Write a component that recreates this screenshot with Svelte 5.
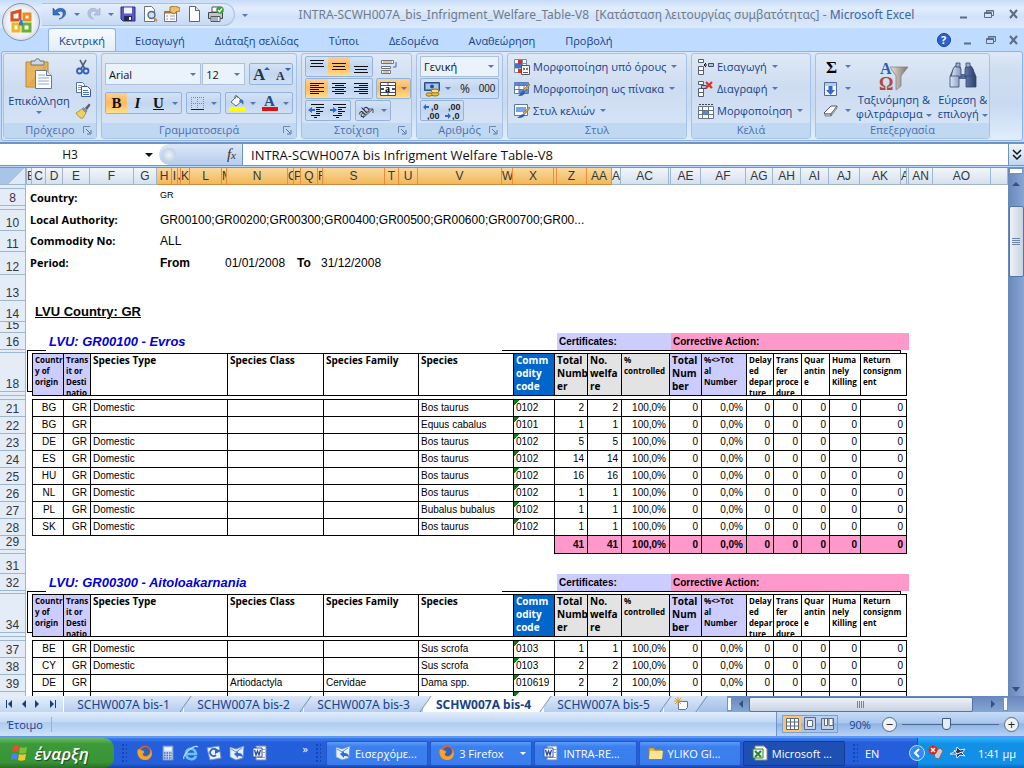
<script>
  const ribbonTabs = ["Κεντρική", "Εισαγωγή", "Διάταξη σελίδας", "Τύποι", "Δεδομένα", "Αναθεώρηση", "Προβολή"]
  let activeTab = $state("Κεντρική")

  const sheets = ["SCHW007A bis-1", "SCHW007A bis-2", "SCHW007A bis-3", "SCHW007A bis-4", "SCHW007A bis-5"]
  let activeSheet = $state("SCHW007A bis-4")

  let cellName = $state("H3")
  let formula = $state("INTRA-SCWH007A bis Infrigment Welfare Table-V8")
  let zoom = $state(46)

  // column letter and width, the last one takes what is left
  const columns = [
    ["", 1], ["B", 5], ["C", 14], ["D", 17], ["E", 27], ["F", 44], ["G", 23], ["H", 15], ["I", 6], ["J", 3],
    ["K", 9], ["L", 32], ["M", 5], ["N", 61], ["O", 6], ["P", 7], ["Q", 17], ["R", 5], ["S", 62], ["T", 14],
    ["U", 19], ["V", 84], ["W", 11], ["X", 41], ["", 3], ["Z", 30], ["AA", 25], ["AB", 9], ["AC", 48], ["", 2],
    ["AE", 30], ["AF", 45], ["AG", 27], ["AH", 28], ["AI", 28], ["AJ", 31], ["AK", 41], ["AL", 6], ["", 2],
    ["AN", 24], ["AO", 58], ["", 0],
  ]
  const isSelected = (i) => i >= 7 && i <= 26

  // one entry per data column: [colspan, heading, class]
  const fields = [
    [2, "Countr\ny of\norigin", "small lilac"],
    [1, "Trans\nit or\nDesti\nnatio", "small lilac"],
    [8, "Species Type", ""],
    [5, "Species Class", ""],
    [3, "Species Family", ""],
    [2, "Species", ""],
    [1, "Comm\nodity\ncode", "blue"],
    [2, "Total\nNumb\ner", "grey"],
    [2, "No.\nwelfa\nre", "grey"],
    [1, "%\ncontrolled", "small grey"],
    [2, "Total\nNum\nber", "lilac"],
    [1, "%<>Tot\nal\nNumber", "small lilac"],
    [1, "Delay\ned\ndepar\nture", "small"],
    [1, "Trans\nfer\nproce\ndure", "small"],
    [1, "Quar\nantin\ne", "small"],
    [1, "Huma\nnely\nKilling", "small"],
    [2, "Return\nconsignm\nent", "small"],
  ]

  const row = (from, type, cls, family, species, code, n) => [
    from, "GR", type, cls, family, species, code, n, n, "100,0%", "0", "0,0%", "0", "0", "0", "0", "0",
  ]

  const evros = [
    row("BG", "Domestic", "", "", "Bos taurus", "0102", "2"),
    row("BG", "", "", "", "Equus cabalus", "0101", "1"),
    row("DE", "Domestic", "", "", "Bos taurus", "0102", "5"),
    row("ES", "Domestic", "", "", "Bos taurus", "0102", "14"),
    row("HU", "Domestic", "", "", "Bos taurus", "0102", "16"),
    row("NL", "Domestic", "", "", "Bos taurus", "0102", "1"),
    row("PL", "Domestic", "", "", "Bubalus bubalus", "0102", "1"),
    row("SK", "Domestic", "", "", "Bos taurus", "0102", "1"),
  ]
  const aitolo = [
    row("BE", "Domestic", "", "", "Sus scrofa", "0103", "1"),
    row("CY", "Domestic", "", "", "Sus scrofa", "0103", "2"),
    row("DE", "", "Artiodactyla", "Cervidae", "Dama spp.", "010619", "2"),
    fields.map(() => ""),
  ]
  const totals = ["41", "41", "100,0%", "0", "0,0%", "0", "0", "0", "0", "0"]

  const quick = ["firefox", "calc", "ie", "outlook", "mail", "word"]
  const tasks = [
    ["mail", "Εισερχόμε..."],
    ["firefox", "3 Firefox"],
    ["word", "INTRA-RE..."],
    ["folder", "YLIKO GI..."],
    ["excel", "Microsoft ..."],
  ]
</script>

{#snippet arrow()}<i class="arrow"></i>{/snippet}

{#snippet lines(kind, y)}
  <svg width="16" height="16" viewBox="0 0 16 16" stroke="#111" stroke-width="1">
    {#if kind == "v"}
      {#each [0, 1, 2] as n}
        <path d="M{n == 1 ? 2 : 1} {n * 3 + y}.5h{n == 1 ? 12 : 14}" />
      {/each}
    {:else}
      {#each [0, 1, 2, 3, 4, 5] as n}
        {@const short = n % 2 ? 5 : 0}
        <path d="M{kind == 'left' ? 1 : kind == 'right' ? 1 + short : 1 + Math.ceil(short / 2)} {n * 2 + y}.5h{14 - short}" />
      {/each}
    {/if}
  </svg>
{/snippet}

{#snippet icon(name)}
  {#if name == "undo"}
    <svg width="16" height="16" viewBox="0 0 16 16"><path d="M1 2v7h7L5.5 6.500C8 4 12 5 11 9c-.5 2-2 3-4 4 4-.5 7-3 6.500-7C13 2 7 1 3.500 4.500z" fill="#3c6fc8" stroke="#2450a0" stroke-width=".6" /></svg>
  {:else if name == "redo"}
    <svg width="16" height="16" viewBox="0 0 16 16"><path d="M14 2v7H8l2.500-2.500C8 4 4 5 4.500 9c.3 2 1.500 3 3 4-4-.5-6-3-5.500-7C3 2 8 1 12 4.500z" fill="#b4c4dc" stroke="#94a8c8" stroke-width=".6" /></svg>
  {:else if name == "save"}
    <svg width="16" height="16" viewBox="0 0 16 16"><path d="M1 1h14v14H3l-2-2z" fill="#5a5ec0" stroke="#2c2c84" /><path d="M4 1.500h8v6H4z" fill="#f0f2ff" /><path d="M4 10h8v5H4z" fill="#26265c" /><path d="M9 11h2v3H9z" fill="#fff" /></svg>
  {:else if name == "preview"}
    <svg width="16" height="16" viewBox="0 0 16 16"><path d="M2.500.5h7l3 3v12h-10z" fill="#fff" stroke="#66758e" /><circle cx="9.500" cy="9" r="3.500" fill="#c8e2f8" stroke="#56647c" stroke-width="1.400" /><path d="M12 12l3 3" stroke="#c98a3a" stroke-width="2" /></svg>
  {:else if name == "props"}
    <svg width="16" height="16" viewBox="0 0 16 16"><path d="M.5 5.500h12v10H.5z" fill="#fff" stroke="#6c7486" /><path d="M.5 5.500h12v2H.5z" fill="#c46a30" /><path d="M2 10h2m2 0h5M2 13h2m2 0h5" stroke="#8a94a8" /><path d="M6 1l5-1 5 2v3l-4 1-2 2-4-2z" fill="#ecc064" stroke="#8c6420" stroke-width=".8" /></svg>
  {:else if name == "new"}
    <svg width="16" height="16" viewBox="0 0 16 16"><path d="M3.500.5h6l4 4v11h-10z" fill="#fff" stroke="#56647c" /><path d="M9.500.5v4h4" fill="#dbe4f0" stroke="#56647c" /></svg>
  {:else if name == "print"}
    <svg width="16" height="16" viewBox="0 0 16 16"><path d="M4 1h7v5H4z" fill="#fff" stroke="#555566" /><path d="M.5 6.500h14v6H.5z" fill="#c2c6cc" stroke="#44484e" /><path d="M3 10.500h9v5H3z" fill="#fff" stroke="#555566" /><path d="M4 12h6M4 14h6" stroke="#56647c" /><circle cx="12" cy="4" r="3.800" fill="#3f9e3a" /><path d="M10 4l1.500 1.700L14 2.500" stroke="#fff" stroke-width="1.300" fill="none" /></svg>
  {:else if name == "paste"}
    <svg width="30" height="32" viewBox="0 0 30 32"><path d="M2 4h22v25H2z" fill="#e9b55c" stroke="#b98632" /><path d="M4 27L22 6v21z" fill="#d79c3e" opacity=".5" /><path d="M7 3h4c0-3 5-3 5 0h4v4H7z" fill="#d0d6de" stroke="#6d7684" /><path d="M11.500 12.500h11l5 5v13h-16z" fill="#fff" stroke="#6b7890" /><path d="M22.500 12.500v5h5" fill="#d5e0f0" stroke="#6b7890" /><path d="M14 17h7m-7 3h11m-11 3h11m-11 3h11" stroke="#8ea6cc" /></svg>
  {:else if name == "cut"}
    <svg width="16" height="16" viewBox="0 0 16 16"><path d="M5 1l5 9M11 1L6 10" stroke="#55627a" stroke-width="1.600" /><circle cx="4.500" cy="12" r="2.500" fill="none" stroke="#2f60c0" stroke-width="1.800" /><circle cx="11" cy="12" r="2.500" fill="none" stroke="#2f60c0" stroke-width="1.800" /></svg>
  {:else if name == "copy"}
    <svg width="16" height="16" viewBox="0 0 16 16"><path d="M1.500 1.500h6l2 2v8h-8z" fill="#fff" stroke="#5271a8" /><path d="M3 4.500h4M3 6.500h5M3 8.500h4" stroke="#7a9ad0" /><path d="M6.500 5.500h6l3 3v7h-9z" fill="#fff" stroke="#3a5a98" /><path d="M8 9.500h5M8 11.500h6M8 13.500h6" stroke="#4a76c0" /></svg>
  {:else if name == "brush"}
    <svg width="16" height="16" viewBox="0 0 16 16"><path d="M1 10l6-4 4 4-3 5c-3 1-5-2-7-5z" fill="#ecd260" stroke="#a08a34" stroke-width=".8" /><path d="M7 5.500l1.500-1.500L12.500 8 11 10z" fill="#8c8e94" /><path d="M10 5l4-4.500L15.500 2 12 7z" fill="#5e5870" /></svg>
  {:else if name == "grow" || name == "shrink"}
    <svg width="20" height="18" viewBox="0 0 20 18"><text x={name == "grow" ? 2 : 4} y="15" font-family="Liberation Serif, serif" font-weight="bold" font-size={name == "grow" ? 17 : 12} fill="#26364a">A</text><path d={name == "grow" ? "M13 5l3-3 3 3z" : "M13 3l3 3 3-3z"} fill="#2a62b8" /></svg>
  {:else if name == "border"}
    <svg width="15" height="15" viewBox="0 0 15 15"><path d="M1.500 1v12M7.500 1v12M13.500 1v12M1 1.500h13M1 7.500h13" stroke="#7b8aa4" stroke-dasharray="1 1" /><path d="M1 13.500h13" stroke="#222" /></svg>
  {:else if name == "fill"}
    <svg width="18" height="18" viewBox="0 0 18 18"><path d="M3 8l6-6 5 5-6 5z" fill="#f4f7fb" stroke="#5e6c80" /><path d="M7 5c-1-4 2-5 3-1" fill="none" stroke="#5e6c80" /><path d="M12 5c4 0 4 4 3 6-1-2-2-3-4-3z" fill="#3a70c4" /><path d="M1 13h16v4H1z" fill="#ff0" /></svg>
  {:else if name == "color"}
    <svg width="18" height="18" viewBox="0 0 18 18"><text x="3" y="12" font-family="Liberation Serif, serif" font-weight="bold" font-size="15" fill="#2b4a86">A</text><path d="M1 13h16v4H1z" fill="#e01010" /></svg>
  {:else if name == "wrap"}
    <svg width="18" height="16" viewBox="0 0 18 16"><path d="M1.500 1.500h12v3h-12zM1.500 7.500h9v2h-9zM1.500 11.500h9v3h-9z" fill="#fff" stroke="#6b7484" /><path d="M3 3h9M3 13h6" stroke="#b88a40" /><path d="M16 3v5h-3" fill="none" stroke="#3a68b4" /></svg>
  {:else if name == "merge"}
    <svg width="18" height="16" viewBox="0 0 18 16"><path d="M1.500 1.500h15v13h-15zM1.500 4.500h15M1.500 11.500h15M9 1v3M9 12v3" fill="#fff" stroke="#444c5c" /><path d="M2 8h3M13 8h3" stroke="#2455a8" stroke-width="2" /><text x="6" y="11" font-family="Liberation Serif, serif" font-size="10" font-weight="bold">a</text></svg>
  {:else if name == "outdent" || name == "indent"}
    <svg width="18" height="16" viewBox="0 0 18 16"><path d="M3 1.500h13M8 4.500h8M8 6.500h4M8 8.500h7M8 10.500h4M3 12.500h9M6 14.500h3" stroke="#111" /><path d={name == "outdent" ? "M0 7l4-3v2h3v2H4v2z" : "M7 7L3 4v2H0v2h3v2z"} fill="#2e68c8" /></svg>
  {:else if name == "orient"}
    <svg width="18" height="16" viewBox="0 0 18 16"><text x="0" y="12" font-family="Liberation Sans, sans-serif" font-size="11" fill="#222" transform="rotate(-45 6 9)">ab</text><path d="M5 15L15 6M15 10V6h-4" fill="none" stroke="#4a5666" /></svg>
  {:else if name == "money"}
    <svg width="18" height="16" viewBox="0 0 18 16"><path d="M1.500 1.500h15v8h-15z" fill="#5b88cc" stroke="#28508c" /><path d="M3 3h12v5H3z" fill="#a8c6ec" /><circle cx="9" cy="5.500" r="2" fill="#28508c" /><ellipse cx="12" cy="13" rx="4" ry="2" fill="#f0c040" stroke="#946c14" /><ellipse cx="12" cy="10" rx="4" ry="2" fill="#fce084" stroke="#946c14" /><ellipse cx="6" cy="13.500" rx="3" ry="1.700" fill="#f0c040" stroke="#946c14" /></svg>
  {:else if name == "incdec" || name == "decdec"}
    <svg width="20" height="18" viewBox="0 0 20 18"><g font-family="Liberation Sans, sans-serif" font-size="9" font-weight="bold" fill="#222"><text x={name == "incdec" ? 9 : 5} y="8">{name == "incdec" ? ",0" : ",00"}</text><text x={name == "incdec" ? 5 : 9} y="17">{name == "incdec" ? ",00" : ",0"}</text></g><path d={name == "incdec" ? "M1 5l3-3v2h3v2H4v2z" : "M8 14l-3-3v2H2v2h3v2z"} fill="#2e68c8" /></svg>
  {:else if name == "cond"}
    <svg width="16" height="16" viewBox="0 0 16 16"><path d="M.5.5h12v13H.5zM.5 4.500h12M.5 9h12M4.500.5v13M8.500.5v13" fill="#fff" stroke="#7a8cae" /><path d="M4 1h4v4H4zM4 10h3v4H4z" fill="#d03428" /><path d="M1 5h7v4H1z" fill="#4272c8" /><path d="M7.500 6.500h8v9h-8z" fill="#fff" stroke="#555" /><path d="M9 9l2 1-2 1m5-2l-2 1 2 1M9 13.500h5" stroke="#333" fill="none" stroke-width=".8" /></svg>
  {:else if name == "tablefmt"}
    <svg width="16" height="16" viewBox="0 0 16 16"><path d="M.5 1.500h14v11H.5z" fill="#fff" stroke="#5b78ac" /><path d="M.5 1.500h14v3H.5zM5 8h9v4H5z" fill="#5c8cdc" /><path d="M.5 4.500h14M.5 8.500h14M5 1v12M10 1v12" stroke="#5b78ac" /><path d="M15 3l1 1-5 6-2-1z" fill="#d8aa50" stroke="#7d5c20" stroke-width=".6" /><path d="M4 15c2-1 3-5 6-5l1 2c-2 3-4 3-7 3z" fill="#2a5cc0" /></svg>
  {:else if name == "cellstyle"}
    <svg width="16" height="16" viewBox="0 0 16 16"><path d="M.5 1.500h13v11H.5z" fill="#fff" stroke="#5b78ac" /><path d="M2 4h10v5H2z" fill="#78a4e8" /><path d="M15 4l1 1-5 6-2-1z" fill="#d8aa50" stroke="#7d5c20" stroke-width=".6" /><path d="M3 15c2-1 4-4 7-4l1 1c-2 3-5 3-8 3z" fill="#2a5cc0" /></svg>
  {:else if name == "insert" || name == "delete"}
    <svg width="16" height="16" viewBox="0 0 16 16"><path d="M.5.5h5v3h-5zM.5 11.500h5v4h-5zM.5 7.500h5v4h-5z" fill="#fff" stroke="#555e70" />{#if name == "insert"}<path d="M10.500 4.500h5v3h-5z" fill="#a8c4f0" stroke="#444c5c" /><path d="M9 6H6M8 4L6 6l2 2" stroke="#111" fill="none" />{:else}<path d="M3.500 4.500h5v3h-5z" fill="#a8c4f0" stroke="#444c5c" /><path d="M8 1l6 6M14 1L8 7" stroke="#e03020" stroke-width="2.200" />{/if}</svg>
  {:else if name == "format"}
    <svg width="16" height="16" viewBox="0 0 16 16"><path d="M.5 3.500h15v12H.5zM.5 7.500h15M.5 11.500h15M4.500 3v12M10.500 3v12" fill="#fff" stroke="#66748e" /><path d="M5 8h5v3H5z" fill="#5888dc" /><path d="M1 1.500h14" stroke="#444" stroke-dasharray="2 1" /></svg>
  {:else if name == "sigma"}
    <svg width="16" height="16" viewBox="0 0 16 16"><text x="3" y="14" font-family="Liberation Serif, serif" font-weight="bold" font-size="17">Σ</text></svg>
  {:else if name == "filldown"}
    <svg width="16" height="16" viewBox="0 0 16 16"><path d="M1.500 1.500h12v13h-12z" fill="#f5f9ff" stroke="#4a68a4" /><path d="M2 2h11v3H2z" fill="#b4ccf0" /><path d="M5.500 5h4v4H12l-4.500 5L3 9h2.500z" fill="#2e68d0" /></svg>
  {:else if name == "eraser"}
    <svg width="16" height="16" viewBox="0 0 16 16"><path d="M1 10l7-7h6l-6 8H2z" fill="#fff" stroke="#555566" /><path d="M2 11h6v2H2zM8 11l6-8v2l-6 8z" fill="#c6ccd6" stroke="#555566" stroke-width=".6" /></svg>
  {:else if name == "sort"}
    <svg width="32" height="32" viewBox="0 0 32 32"><defs><linearGradient id="funnel"><stop offset="0" stop-color="#e8e4da" /><stop offset="1" stop-color="#77736c" /></linearGradient></defs><path d="M12 7h18l-7 9v10l-5 4V16z" fill="url(#funnel)" stroke="#8a8478" stroke-width=".8" /><text x="2" y="14" font-family="Liberation Serif, serif" font-weight="bold" font-size="16" fill="#2d5cb4">A</text><text x="1" y="30" font-family="Liberation Serif, serif" font-weight="bold" font-size="18" fill="#b0483c">Ω</text></svg>
  {:else if name == "find"}
    <svg width="30" height="32" viewBox="0 0 30 30"><defs><linearGradient id="lens"><stop offset="0" stop-color="#dde6f4" /><stop offset=".5" stop-color="#6f86b4" /><stop offset="1" stop-color="#2c3f6c" /></linearGradient></defs><path d="M6 6h7v7h4V6h7l4 8v6h-9v-2h-8v2H2v-6z" fill="#56699a" /><path d="M5 8l2-3h4l2 3v8H3zM17 8l2-3h4l2 3 2 8H17z" fill="url(#lens)" stroke="#34466e" stroke-width=".8" /><path d="M8 2h4v4H8zM18 2h4v4h-4z" fill="#9fb0d0" stroke="#34466e" stroke-width=".8" /><path d="M2 15h9v11H2zM18 15h10v11H18z" fill="url(#lens)" stroke="#34466e" stroke-width=".8" /></svg>
  {:else if name == "firefox"}
    <svg width="16" height="16" viewBox="0 0 16 16"><circle cx="8" cy="8" r="7.200" fill="#e8641c" /><circle cx="8.500" cy="6.500" r="4.500" fill="#3460b8" /><path d="M1 4c1 1 2 0 3 1s3 0 3 2-2 1-1 3 4 2 6 0 2-4 1-6c3 3 2 8-1 10s-8 1-10-2S0 6 1 4z" fill="#f4a428" /></svg>
  {:else if name == "calc"}
    <svg width="16" height="16" viewBox="0 0 16 16"><path d="M3 1h10v14H3z" fill="#c6d8f4" stroke="#6c8cc4" /><path d="M4.500 2.500h7v3h-7z" fill="#f5faff" /><path d="M4 8h8M4 10.500h8M4 13h8" stroke="#4468a8" stroke-width="1.400" stroke-dasharray="1.500 1" /></svg>
  {:else if name == "ie"}
    <svg width="16" height="16" viewBox="0 0 16 16"><path d="M13 11c-2 5-10 4-10-2.500S12 2 13 9H4" fill="none" stroke="#6cc0f8" stroke-width="2.600" /><path d="M1 14C-1 10 11-1 15 2" fill="none" stroke="#b8e2fc" stroke-width="1.200" /></svg>
  {:else if name == "outlook"}
    <svg width="16" height="16" viewBox="0 0 16 16"><path d="M1 3l12-2 2 12-11 2z" fill="#eef4fc" stroke="#7893c0" /><path d="M10 10a3.500 3.500 0 1 1 0-5" fill="none" stroke="#2c68c0" stroke-width="1.800" /><path d="M9 3l6 3-6 3z" fill="#2c68c0" /></svg>
  {:else if name == "mail"}
    <svg width="16" height="16" viewBox="0 0 16 16"><path d="M1 2l6 2 8-3-1 12-7 2-6-3z" fill="#e4effc" stroke="#6c8cc4" stroke-width=".8" /><path d="M2 4l5 3 6-4" fill="none" stroke="#6c8cc4" /><path d="M5 9l4-3v2c3 0 5 1 5 5-1-2-3-2-5-2v2z" fill="#2a6ed4" /></svg>
  {:else if name == "word"}
    <svg width="16" height="16" viewBox="0 0 16 16"><path d="M4 1h10v14H4z" fill="#fff" stroke="#7088b8" /><path d="M6 12.500h7M10 4.500h3M11 7.500h2" stroke="#88a0d0" /><path d="M1 3h9v9H1z" fill="#f4f8ff" stroke="#3a5ca8" /><path d="M2.500 5l1.500 5 1.500-4L7 10l1.500-5" fill="none" stroke="#2c4c98" stroke-width="1.300" /></svg>
  {:else if name == "folder"}
    <svg width="16" height="16" viewBox="0 0 16 16"><path d="M1 3h5l1 2h7v9H1z" fill="#e4b93c" stroke="#a88220" stroke-width=".8" /><path d="M2 6h13l-1 8H1z" fill="#fbe490" /></svg>
  {:else if name == "excel"}
    <svg width="16" height="16" viewBox="0 0 16 16"><path d="M3 1h9l3 3v11H3z" fill="#fff" stroke="#888" /><path d="M1 4h10v9H1z" fill="#e9f6e6" stroke="#2c8434" /><path d="M3 6l6 6M9 6l-6 6" stroke="#2c8434" stroke-width="2" /></svg>
  {:else if name == "launch"}
    <svg width="9" height="9" viewBox="0 0 9 9"><path d="M.5 7V.5H7" fill="none" stroke="#7088b0" /><path d="M3 3l4 4M8 4v4H4" fill="none" stroke="#5672a4" /></svg>
  {/if}
{/snippet}

{#snippet winButtons()}
  <button aria-label="Ελαχιστοποίηση"><svg width="12" height="12"><path d="M2 9.500h7" stroke="#5c6c84" stroke-width="2" /></svg></button>
  <button aria-label="Επαναφορά"><svg width="12" height="12"><path d="M3.500 4V2.500h7v5H9M1.500 4.500h7v5h-7zM1.500 5.500h7M3 3h7" fill="none" stroke="#5c6c84" /></svg></button>
  <button aria-label="Κλείσιμο"><svg width="12" height="12"><path d="M2 2l7 8M9 2l-7 8" stroke="#5c6c84" stroke-width="2" /></svg></button>
{/snippet}

{#snippet rowHead(n)}<th class="rowhead" scope="row"><div>{n}</div></th>{/snippet}

{#snippet sectionTitle(n, title)}
  <tr class="h17">
    {@render rowHead(n)}
    <td colspan="3"></td>
    <td colspan="21" class="section">{title}</td>
    <td></td>
    <td colspan="5" class="band lilac">Certificates:</td>
    <td colspan="9" class="band pink">Corrective Action:</td>
    <td colspan="3"></td>
  </tr>
{/snippet}

{#snippet tableHead(n)}
  <tr class="h3">
    {@render rowHead("")}
    <td></td>
    <td class="frame-top frame-left"></td>
    <td class="frame-top"></td>
    <td colspan="19"></td>
    <td colspan="15" class="frame-top frame-right"></td>
    <td colspan="5"></td>
  </tr>
  <tr class="h39">
    {@render rowHead(n)}
    <td></td>
    <td class="frame-left frame-bottom"></td>
    {#each fields as [span, text, cls]}
      <th colspan={span} rowspan="2" class="field {cls}"><div>{text}</div></th>
    {/each}
    <td colspan="4"></td>
  </tr>
  <tr class="h4">{@render rowHead("")}<td colspan="2"></td><td colspan="4"></td></tr>
  <tr class="h4">{@render rowHead("")}<td colspan="2"></td><td colspan="36" class="ruled"></td><td colspan="4"></td></tr>
{/snippet}

{#snippet dataRow(n, cells)}
  <tr class="h17">
    {@render rowHead(n)}
    <td colspan="2"></td>
    {#each cells as text, i}
      <td
        colspan={fields[i][0]}
        class="cell"
        class:mid={i == 0}
        class:num={i == 1 || i > 6}
        class:flag={i == 6}>{text}</td
      >
    {/each}
    <td colspan="4"></td>
  </tr>
{/snippet}

<div class="app">
  <div class="top">
    <button class="office" aria-label="Office">
      <svg width="26" height="26" viewBox="0 0 26 26" fill="none" stroke-width="3">
        <path d="M11 11H4V4l8-2v9" stroke="#d8501c" />
        <path d="M16 5h6v6h-6z" stroke="#ee8a1c" />
        <path d="M5 15h6v7H5z" stroke="#f0b81c" />
        <path d="M15 15h7v7h-7z" stroke="#6cb030" />
        <path d="M11 15h4M13 11v4" stroke="#2c80c8" />
      </svg>
    </button>
    <header class="titlebar">
      <div class="qat">
        <button aria-label="Αναίρεση">{@render icon("undo")}</button>{@render arrow()}
        <button aria-label="Ακύρωση αναίρεσης">{@render icon("redo")}</button>{@render arrow()}
        {#each ["save", "preview", "props", "new", "print"] as name}
          <button aria-label={name}>{@render icon(name)}</button>
        {/each}
      </div>
      <div class="qat-more">{@render arrow()}</div>
      <h1>
        INTRA-SCWH007A_bis_Infrigment_Welfare_Table-V8&nbsp; [Κατάσταση λειτουργίας συμβατότητας] - <b>Microsoft Excel</b>
      </h1>
      <div class="win">{@render winButtons()}</div>
    </header>
    <nav class="tabs">
      {#each ribbonTabs as tab}
        <button class:active={tab == activeTab} onclick={() => (activeTab = tab)}>{tab}</button>
      {/each}
      <div class="win">
        <button aria-label="Βοήθεια"><svg width="14" height="14"><circle cx="7" cy="7" r="6.500" fill="#2b62d0" stroke="#17408f" /><text x="4" y="11" font-size="11" font-weight="bold" fill="#fff">?</text></svg></button>
        {@render winButtons()}
      </div>
    </nav>
  </div>

  <div class="ribbon">
    <section class="group clipboard">
      <div class="body">
        <button class="big">{@render icon("paste")}<span>Επικόλληση</span>{@render arrow()}</button>
        <div class="stack">
          <button aria-label="Αποκοπή">{@render icon("cut")}</button>
          <button aria-label="Αντιγραφή">{@render icon("copy")}</button>
          <button aria-label="Πινέλο μορφοποίησης">{@render icon("brush")}</button>
        </div>
      </div>
      <h2>Πρόχειρο<span>{@render icon("launch")}</span></h2>
    </section>

    <section class="group font">
      <div class="body rows two">
        <div class="line">
          <div class="combo family"><select aria-label="Γραμματοσειρά"><option>Arial</option></select>{@render arrow()}</div>
          <div class="combo size"><select aria-label="Μέγεθος"><option>12</option></select>{@render arrow()}</div>
          <div class="set push">
            <button aria-label="Μεγέθυνση">{@render icon("grow")}</button>
            <button aria-label="Σμίκρυνση">{@render icon("shrink")}</button>
          </div>
        </div>
        <div class="line spread">
          <div class="set serif">
            <button class="on">B</button>
            <button class="it">I</button>
            <button class="un">U</button>
            {@render arrow()}
          </div>
          <div class="set"><button aria-label="Περίγραμμα">{@render icon("border")}</button>{@render arrow()}</div>
          <div class="set">
            <button aria-label="Γέμισμα">{@render icon("fill")}</button>{@render arrow()}
            <button aria-label="Χρώμα">{@render icon("color")}</button>{@render arrow()}
          </div>
        </div>
      </div>
      <h2>Γραμματοσειρά<span>{@render icon("launch")}</span></h2>
    </section>

    <section class="group align">
      <div class="body rows">
        <div class="line">
          <div class="set">
            <button aria-label="Επάνω">{@render lines("v", 1)}</button>
            <button class="on" aria-label="Μέση">{@render lines("v", 4)}</button>
            <button aria-label="Κάτω">{@render lines("v", 7)}</button>
          </div>
          <button class="wrap" aria-label="Αναδίπλωση">{@render icon("wrap")}</button>
        </div>
        <div class="line">
          <div class="set">
            <button class="on" aria-label="Αριστερά">{@render lines("left", 2)}</button>
            <button aria-label="Κέντρο">{@render lines("center", 2)}</button>
            <button aria-label="Δεξιά">{@render lines("right", 2)}</button>
          </div>
          <div class="set on"><button aria-label="Συγχώνευση">{@render icon("merge")}</button>{@render arrow()}</div>
        </div>
        <div class="line">
          <div class="set">
            <button aria-label="Μείωση εσοχής">{@render icon("outdent")}</button>
            <button aria-label="Αύξηση εσοχής">{@render icon("indent")}</button>
          </div>
          <div class="set"><button aria-label="Προσανατολισμός">{@render icon("orient")}</button>{@render arrow()}</div>
        </div>
      </div>
      <h2>Στοίχιση<span>{@render icon("launch")}</span></h2>
    </section>

    <section class="group number">
      <div class="body rows">
        <div class="line">
          <div class="combo wide"><select aria-label="Μορφή αριθμού"><option>Γενική</option></select>{@render arrow()}</div>
        </div>
        <div class="line">
          <div class="set full">
            <button aria-label="Λογιστική">{@render icon("money")}</button>{@render arrow()}
            <button class="percent">%</button>
            <button class="zeros">000</button>
          </div>
        </div>
        <div class="line">
          <div class="set">
            <button aria-label="Περισσότερα δεκαδικά">{@render icon("incdec")}</button>
            <button aria-label="Λιγότερα δεκαδικά">{@render icon("decdec")}</button>
          </div>
        </div>
      </div>
      <h2>Αριθμός<span>{@render icon("launch")}</span></h2>
    </section>

    <section class="group style">
      <div class="body rows">
        <button class="item">{@render icon("cond")}Μορφοποίηση υπό όρους{@render arrow()}</button>
        <button class="item">{@render icon("tablefmt")}Μορφοποίηση ως πίνακα{@render arrow()}</button>
        <button class="item">{@render icon("cellstyle")}Στυλ κελιών{@render arrow()}</button>
      </div>
      <h2>Στυλ</h2>
    </section>

    <section class="group cells">
      <div class="body rows">
        <button class="item">{@render icon("insert")}Εισαγωγή{@render arrow()}</button>
        <button class="item">{@render icon("delete")}Διαγραφή{@render arrow()}</button>
        <button class="item">{@render icon("format")}Μορφοποίηση{@render arrow()}</button>
      </div>
      <h2>Κελιά</h2>
    </section>

    <section class="group editing">
      <div class="body">
        <div class="stack">
          <button aria-label="Άθροισμα">{@render icon("sigma")}{@render arrow()}</button>
          <button aria-label="Συμπλήρωση">{@render icon("filldown")}{@render arrow()}</button>
          <button aria-label="Απαλοιφή">{@render icon("eraser")}{@render arrow()}</button>
        </div>
        <button class="big">{@render icon("sort")}<span>Ταξινόμηση &amp;</span><span>φιλτράρισμα{@render arrow()}</span></button>
        <button class="big">{@render icon("find")}<span>Εύρεση &amp;</span><span>επιλογή{@render arrow()}</span></button>
      </div>
      <h2>Επεξεργασία</h2>
    </section>
  </div>

  <div class="formulabar">
    <div class="namebox">
      <input aria-label="Πλαίσιο ονόματος" bind:value={cellName} />
      <i class="arrow dark"></i>
    </div>
    <div class="fx"><span class="knob"></span><em>f<small>x</small></em></div>
    <input class="formula" aria-label="Γραμμή τύπων" bind:value={formula} />
    <button class="expand" aria-label="Ανάπτυξη"><svg width="10" height="12"><path d="M1 1l4 4 4-4M1 6l4 4 4-4" fill="none" stroke="#111" stroke-width="1.500" /></svg></button>
  </div>

  <main class="sheet">
    <div class="grid">
      <table>
        <colgroup>
          <col style="width: 26px" />
          {#each columns as [, width]}
            <col style={width ? `width: ${width}px` : ""} />
          {/each}
        </colgroup>
        <thead>
          <tr>
            <th class="corner"></th>
            {#each columns as [letter], i}
              <th class="colhead" class:selected={isSelected(i)}><div>{letter}</div></th>
            {/each}
          </tr>
        </thead>
        <tbody>
          <tr class="h4">{@render rowHead("")}<td colspan="42"></td></tr>
          <tr class="h17">
            {@render rowHead(8)}
            <td colspan="7" class="label">Country:</td>
            <td colspan="35" class="tiny">GR</td>
          </tr>
          <tr class="h4">{@render rowHead("")}<td colspan="42"></td></tr>
          <tr class="h21">
            {@render rowHead(10)}
            <td colspan="7" class="label">Local Authority:</td>
            <td colspan="35" class="value">GR00100;GR00200;GR00300;GR00400;GR00500;GR00600;GR00700;GR00...</td>
          </tr>
          <tr class="h21">
            {@render rowHead(11)}
            <td colspan="7" class="label">Commodity No:</td>
            <td colspan="35" class="value">ALL</td>
          </tr>
          <tr class="h23">
            {@render rowHead(12)}
            <td colspan="7" class="label">Period:</td>
            <td colspan="5" class="value bold">From</td>
            <td colspan="3" class="value">01/01/2008</td>
            <td colspan="2" class="value bold">To</td>
            <td colspan="25" class="value">31/12/2008</td>
          </tr>
          <tr class="h26">{@render rowHead(13)}<td colspan="42"></td></tr>
          <tr class="h21">
            {@render rowHead(14)}
            <td colspan="2"></td>
            <td colspan="40" class="country">LVU Country: GR</td>
          </tr>
          <tr class="h11">{@render rowHead(15)}<td colspan="42"></td></tr>

          {@render sectionTitle(16, "LVU: GR00100 - Evros")}
          {@render tableHead(18)}
          {#each evros as cells, i}
            {@render dataRow(21 + i, cells)}
          {/each}
          <tr class="h14">
            {@render rowHead(29)}
            <td colspan="24"></td>
            {#each totals as text, i}
              <td colspan={fields[i + 7][0]} rowspan="2" class="cell num total">{text}</td>
            {/each}
            <td colspan="4"></td>
          </tr>
          <tr class="h4">{@render rowHead("")}<td colspan="24"></td><td colspan="4"></td></tr>
          <tr class="h20">{@render rowHead(31)}<td colspan="42"></td></tr>

          {@render sectionTitle(32, "LVU: GR00300 - Aitoloakarnania")}
          {@render tableHead(34)}
          {#each aitolo as cells, i}
            {@render dataRow(i < 3 ? 37 + i : "", cells)}
          {/each}
        </tbody>
      </table>
    </div>
    <div class="vscroll">
      <span class="split"></span>
      <i class="tri up"></i>
      <div class="thumb"></div>
      <i class="tri down"></i>
    </div>
  </main>

  <div class="sheetbar">
    <div class="sheetnav">
      <svg width="63" height="16" fill="#1c3c78"><path d="M6 4h1v8H6zM12 4v8L8 8zM26 4v8l-4-4zM35 4v8l4-4zM50 4v8l4-4zM55 4h1v8h-1z" /></svg>
    </div>
    {#each sheets as name}
      <button class="sheettab" class:active={name == activeSheet} onclick={() => (activeSheet = name)}>{name}</button>
    {/each}
    <button class="sheettab add" aria-label="Εισαγωγή φύλλου">
      <svg width="18" height="16"><path d="M5.500 5.500h9v6l-2 2h-7z" fill="#fff" stroke="#5876ac" /><path d="M5 1v8M1 5h8M2 2l6 6M8 2l-6 6" stroke="#e89c28" /></svg>
    </button>
    <div class="hscroll">
      <span class="grip"></span>
      <i class="tri left"></i>
      <div class="thumb"></div>
      <i class="tri right"></i>
      <span class="grip"></span>
    </div>
  </div>

  <div class="status">
    <span class="ready">Έτοιμο</span>
    <div class="zoombar">
      <div class="views">
        <button class="on" aria-label="Κανονική"><svg width="16" height="14"><path d="M2.500 1.500h12v11h-12zM2.500 5h12M2.500 9h12M6.500 1v12M10.500 1v12" fill="#fff" stroke="#5c6880" /></svg></button>
        <button aria-label="Διάταξη σελίδας"><svg width="16" height="14"><path d="M2.500.5h11v12h-11z" fill="#c8d4e6" stroke="#5c6880" /><path d="M5.500 3.500h5v6h-5z" fill="#fff" stroke="#5c6880" /></svg></button>
        <button aria-label="Προεπισκόπηση"><svg width="16" height="14"><path d="M1.500 1.500h12v11h-12z" fill="#c8d4e6" stroke="#5c6880" /><path d="M4.500 1.500h3v7h-3zM9 1.500h4v7H9z" fill="#fff" stroke="#5c6880" /></svg></button>
      </div>
      <span class="pct">90%</span>
      <button class="round" aria-label="Σμίκρυνση">−</button>
      <input type="range" aria-label="Ζουμ" bind:value={zoom} />
      <button class="round" aria-label="Μεγέθυνση">+</button>
    </div>
  </div>

  <footer class="taskbar">
    <button class="start">
      <svg width="18" height="18" viewBox="0 0 18 18"><path d="M2 3c2-2 4-2 6-1L7 8C5 7 3 7 1 8z" fill="#e8502c" /><path d="M9 3c2 1 4 1 7 0l-1 6c-3 1-5 1-7 0z" fill="#7cc038" /><path d="M1 10c2-1 4-1 6 0l-1 6c-2-1-4-1-6 0z" fill="#4a84e8" /><path d="M8 10c2 1 4 1 7 0l-1 6c-3 1-5 1-7 0z" fill="#f8c828" /></svg>
      έναρξη
    </button>
    <span class="dots"></span>
    <div class="quick">
      {#each quick as name}
        <button aria-label={name}>{@render icon(name)}</button>
      {/each}
      <span class="more">»</span>
    </div>
    <span class="dots"></span>
    <div class="tasks">
      {#each tasks as [name, title]}
        <button class:current={name == "excel"}>
          {@render icon(name)}<span>{title}</span>
          {#if name == "firefox"}<i class="arrow light"></i>{/if}
        </button>
      {/each}
    </div>
    <span class="dots"></span>
    <span class="lang">EN</span>
    <div class="tray">
      <button class="hide" aria-label="Απόκρυψη"><svg width="16" height="16"><circle cx="8" cy="8" r="7.500" fill="#2f8cf0" stroke="#b8e0ff" /><path d="M10 4L6 8l4 4" fill="none" stroke="#fff" stroke-width="2" /></svg></button>
      <svg width="18" height="16"><path d="M6 7l6-4 3 3-4 8-4-1z" fill="#c8ccd4" stroke="#666c78" /><circle cx="5" cy="5" r="4.500" fill="#d82818" /><path d="M3 3l4 4M7 3L3 7" stroke="#fff" stroke-width="1.400" /></svg>
      <svg width="18" height="16"><path d="M1 9l6-3 1-4 3 3 5-1-3 4 3 3-5-1-3 3-1-4z" fill="#1c3878" stroke="#e4f0ff" /><path d="M5 5l3 4 5-2" stroke="#fff" fill="none" /></svg>
      <time>1:41 μμ</time>
    </div>
  </footer>
</div>

<style>
  :global(body) {
    margin: 0;
    overflow: hidden;
  }
  .app {
    height: 100vh;
    display: flex;
    flex-direction: column;
    font-family: "Open Sans", "Noto Sans", sans-serif;
    font-size: 11px;
    color: #15428b;
    background-color: #bfdbff;
  }
  .app * {
    box-sizing: border-box;
  }
  button,
  input,
  select {
    font: inherit;
    color: inherit;
    border: none;
    background: none;
    padding: 0;
    margin: 0;
    outline: none;
  }
  button {
    display: flex;
    align-items: center;
    justify-content: center;
    white-space: nowrap;
  }
  svg {
    display: block;
    flex: none;
  }
  h1,
  h2 {
    margin: 0;
    font-weight: normal;
    font-size: 11px;
  }

  .arrow {
    flex: none;
    display: inline-block;
    width: 5px;
    border: solid transparent;
    border-width: 3px 3px 0;
    border-top-color: #5579b4;
    vertical-align: middle;
  }
  .arrow.dark {
    border-width: 4px 4px 0;
    border-top-color: #111;
  }
  .arrow.light {
    border-top-color: #fff;
    margin-left: auto;
  }

  /* title bar and tabs */

  .top {
    position: relative;
    flex: none;
  }
  .office {
    position: absolute;
    left: 2px;
    top: 3px;
    z-index: 1;
    width: 38px;
    height: 38px;
    border-radius: 50%;
    border: 1px solid #8296b4;
    background: radial-gradient(circle, #fff 0, #eef1f6 55%, #b4bccb 100%);
  }
  .titlebar {
    height: 28px;
    display: flex;
    align-items: center;
    padding: 0 4px 0 42px;
    background: linear-gradient(#c8dcf8, #e2edfc 30%, #d0e2fa 60%, #dceafc);
  }
  .qat {
    display: flex;
    align-items: center;
    gap: 6px;
    height: 23px;
    padding: 0 10px;
    border: 1px solid #a9c2e4;
    border-left: none;
    border-radius: 0 12px 12px 0;
    background: linear-gradient(#e4eefb, #c6daf4);
  }
  .qat-more {
    width: 20px;
    text-align: center;
    line-height: 1;
  }
  h1 {
    flex: 1;
    text-align: center;
    color: #6f7b8c;
    font-family: "Noto Sans", sans-serif;
    font-size: 12px;
    white-space: nowrap;
  }
  h1 b {
    font-weight: normal;
    color: #3c66a4;
  }
  .win {
    display: flex;
    gap: 13px;
    align-items: center;
  }
  .tabs {
    height: 23px;
    display: flex;
    padding: 0 4px 0 48px;
    gap: 8px;
    background-color: #bfdbff;
  }
  .tabs > button {
    padding: 0 10px;
    border: 1px solid transparent;
    border-bottom: none;
  }
  .tabs > button.active {
    border-color: #8db2e3;
    border-radius: 3px 3px 0 0;
    background: linear-gradient(#f8fbff, #e2edfa);
  }
  .tabs .win {
    margin-left: auto;
    gap: 11px;
  }

  /* ribbon */

  .ribbon {
    flex: none;
    display: flex;
    gap: 4px;
    height: 90px;
    padding: 1px;
    margin: 0 1px;
    border: 1px solid #8db2e3;
    border-radius: 3px;
    background: linear-gradient(#dde9f7, #d0def0 20%, #c9daf0 60%, #e0eefc);
  }
  .group {
    flex: none;
    display: flex;
    flex-direction: column;
    border: 1px solid #a6c2e6;
    border-radius: 3px;
    background: linear-gradient(#dfe9f6, #cddcf0 40%, #d6e5f8);
  }
  .clipboard {
    width: 94px;
  }
  .font {
    width: 196px;
  }
  .align {
    width: 111px;
  }
  .number {
    width: 87px;
  }
  .style {
    width: 180px;
  }
  .cells {
    width: 120px;
  }
  .editing {
    width: 175px;
  }
  .body {
    flex: 1;
    display: flex;
    padding: 2px 3px 0;
  }
  .rows {
    flex-direction: column;
    gap: 1px;
  }
  .rows.two {
    gap: 7px;
    padding-top: 9px;
  }
  .group h2 {
    height: 15px;
    line-height: 14px;
    display: flex;
    justify-content: center;
    color: #4a6fb0;
    background-color: #c1d8f2;
  }
  .group h2 span {
    padding-top: 3px;
    margin-left: auto;
    margin-right: 4px;
  }
  .group h2:has(span)::before {
    content: "";
    width: 13px;
    margin-right: auto;
  }
  .big {
    flex-direction: column;
    justify-content: flex-start;
    line-height: 13px;
    padding: 2px 2px 0;
    gap: 1px;
  }
  .big span .arrow {
    margin-left: 3px;
  }
  .clipboard .big {
    width: 64px;
    gap: 4px;
  }
  .editing .big {
    padding: 4px 3px 0;
  }
  .stack {
    display: flex;
    flex-direction: column;
    gap: 1px;
    padding-left: 4px;
  }
  .stack button {
    height: 21px;
    gap: 6px;
  }
  .editing .stack {
    padding-right: 2px;
  }
  .line {
    display: flex;
    gap: 4px;
    height: 21px;
  }
  .two .line {
    gap: 1px;
    height: 22px;
  }
  .two .spread {
    gap: 4px;
  }
  .combo {
    display: flex;
    align-items: center;
    padding: 0 4px 0 3px;
    border: 1px solid #abc1de;
    background-color: #eaf2fb;
    color: #111;
  }
  .combo select {
    flex: 1;
    min-width: 0;
    appearance: none;
  }
  .family {
    width: 97px;
  }
  .size {
    width: 43px;
  }
  .wide {
    width: 79px;
  }
  .set {
    display: flex;
    align-items: center;
    border: 1px solid #93b2dc;
    border-radius: 2px;
    background: linear-gradient(#d4e3f6, #c2d6f0 50%, #cfe0f5);
  }
  .set.push {
    margin-left: 3px;
  }
  .set.full {
    width: 79px;
    color: #222;
  }
  .set button {
    height: 100%;
    min-width: 21px;
  }
  .set .arrow {
    margin: 0 3px;
  }
  .set .on,
  .set.on {
    background: linear-gradient(#fbd093, #fdb95c 50%, #ffe08c);
  }
  .align .set:not(.on) button {
    min-width: 22px;
  }
  .align .line:nth-child(2) {
    gap: 3px;
  }
  .wrap {
    margin-left: 3px;
  }
  .percent,
  .zeros {
    flex: 1;
    font-size: 12px;
  }
  .zeros {
    font-family: "Liberation Sans", sans-serif;
    font-size: 10px;
  }
  .serif {
    font-family: "Liberation Serif", serif;
    font-weight: bold;
    font-size: 15px;
    color: #111;
  }
  .it {
    font-style: italic;
  }
  .un {
    text-decoration: underline;
  }
  .item {
    height: 21px;
    justify-content: flex-start;
    gap: 3px;
    padding-left: 3px;
  }
  .item .arrow {
    margin-left: 2px;
  }

  /* formula bar */

  .formulabar {
    flex: none;
    display: flex;
    height: 24px;
    margin-top: 1px;
    border-top: 2px solid #6f93c4;
    border-bottom: 1px solid #6f93c4;
    background-color: #fff;
    color: #111;
    font-size: 13px;
  }
  .namebox {
    width: 159px;
    display: flex;
    align-items: center;
    padding: 0 6px 0 1px;
  }
  .namebox input {
    flex: 1;
    min-width: 0;
    text-align: center;
    padding-right: 6px;
    font-size: 12px;
  }
  .fx {
    width: 84px;
    display: flex;
    align-items: center;
    justify-content: space-between;
    padding: 0 6px 0 3px;
    border-right: 1px solid #6f93c4;
    border-radius: 11px 0 0 11px;
    background: linear-gradient(#dbe7f8, #b6cdee);
  }
  .knob {
    width: 14px;
    height: 14px;
    border-radius: 50%;
    background: radial-gradient(circle, #eef3fa, #b2c2da);
  }
  .fx em {
    font-family: "Liberation Serif", serif;
    font-size: 15px;
    color: #333;
  }
  .fx small {
    font-size: 11px;
  }
  .formula {
    flex: 1;
    padding-left: 8px;
  }
  .expand {
    width: 16px;
    border-left: 1px solid #6f93c4;
    background: linear-gradient(#eef4fc, #c3d7f2);
  }

  /* worksheet */

  .sheet {
    flex: 1;
    min-height: 0;
    display: flex;
    margin-top: 1px;
    border-top: 1px solid #6f93c4;
    background-color: #fff;
  }
  .grid {
    flex: 1;
    min-width: 0;
    overflow: hidden;
  }
  table {
    width: 100%;
    table-layout: fixed;
    border-collapse: separate;
    border-spacing: 0;
    color: #000;
  }
  th,
  td {
    padding: 0;
    line-height: 1;
    white-space: nowrap;
  }
  .corner,
  .colhead {
    height: 17px;
    border-right: 1px solid #9eb6ce;
    border-bottom: 1px solid #9eb6ce;
    background: linear-gradient(#f2f6fb, #d6e0ec);
  }
  .corner {
    background: linear-gradient(135deg, #a9c4e9 60%, #dfeaf8 60%);
  }
  .colhead div {
    height: 16px;
    overflow: hidden;
    text-align: center;
    font: 12px/16px "Liberation Sans", sans-serif;
    color: #33363c;
  }
  .colhead.selected {
    background: linear-gradient(#f9d89c, #f2b85a);
    border-right-color: #ee8c3c;
    border-bottom-color: #d48a3c;
  }
  .rowhead {
    border-right: 1px solid #9eb6ce;
    border-bottom: 1px solid #9eb6ce;
    background-color: #e4ecf7;
    vertical-align: bottom;
  }
  .rowhead div {
    display: flex;
    align-items: flex-end;
    justify-content: center;
    font: 12px/13px "Liberation Sans", sans-serif;
    color: #33363c;
  }
  .h11 .rowhead div {
    max-height: 10px;
    overflow: hidden;
  }
  .h3 { height: 3px; }
  .h4 { height: 4px; }
  .h11 { height: 11px; }
  .h14 { height: 14px; }
  .h17 { height: 17px; }
  .h20 { height: 20px; }
  .h21 { height: 21px; }
  .h23 { height: 23px; }
  .h26 { height: 26px; }
  .h39 { height: 39px; }
  .label {
    padding-left: 4px;
    font-weight: bold;
    font-size: 11px;
  }
  .value,
  .tiny {
    padding-left: 3px;
    font-family: "Liberation Sans", sans-serif;
    font-size: 12px;
  }
  .h21 .label,
  .h21 .value,
  .h23 .label,
  .h23 .value {
    padding-bottom: 2px;
  }
  .tiny {
    padding-top: 2px;
    font-size: 9px;
    vertical-align: top;
  }
  .bold {
    font-weight: bold;
  }
  .country,
  .section {
    padding-left: 3px;
    font: bold 13px/15px "Liberation Sans", sans-serif;
  }
  .country {
    text-decoration: underline;
  }
  .section {
    font-style: italic;
    color: #0000d8;
  }
  .band {
    padding-left: 2px;
    font: bold 10px/15px "Liberation Sans", sans-serif;
  }
  .lilac {
    background-color: #ccccff;
  }
  .pink,
  .total {
    background-color: #ff99cc;
  }
  .grey {
    background-color: #e3e3e3;
  }
  .frame-top {
    border-top: 1px solid #000;
  }
  .frame-left {
    border-left: 1px solid #000;
  }
  .frame-right {
    border-right: 1px solid #000;
  }
  .frame-bottom {
    border-bottom: 1px solid #000;
  }
  .field {
    border: solid #000;
    border-width: 1px 0 1px 1px;
    vertical-align: top;
    text-align: left;
  }
  .field:nth-last-child(2) {
    border-right-width: 1px;
  }
  .field div {
    height: 41px;
    padding-left: 2px;
    overflow: hidden;
    white-space: pre;
    font-size: 10px;
    line-height: 13px;
  }
  .field.small div {
    font-size: 8px;
    line-height: 11px;
  }
  .field.blue {
    background-color: #0066cc;
    color: #fff;
  }
  .ruled {
    border-bottom: 1px solid #000;
  }
  .cell {
    padding-left: 2px;
    border: solid #000;
    border-width: 0 0 1px 1px;
    font: 10px/12px "Liberation Sans", sans-serif;
  }
  .cell:nth-last-child(2) {
    border-right-width: 1px;
  }
  .cell.mid {
    text-align: center;
  }
  .cell.num {
    padding: 0 3px 0 0;
    text-align: right;
  }
  .cell.flag {
    background: linear-gradient(135deg, #107c10 4px, transparent 4px);
  }
  .cell.total {
    font-weight: bold;
  }

  /* scroll bars */

  .vscroll {
    width: 16px;
    display: flex;
    flex-direction: column;
    align-items: center;
    background: linear-gradient(90deg, #6688bc, #86a6d4);
  }
  .split {
    width: 14px;
    height: 6px;
    border: 1px solid #6f93c4;
    background-color: #fff;
  }
  .tri {
    border: 4px solid transparent;
  }
  .up {
    margin: 4px 0 20px;
    border-bottom-color: #35507e;
  }
  .down {
    margin: auto 0 0;
    border-top-color: #35507e;
    border-top-width: 5px;
  }
  .vscroll .thumb {
    width: 15px;
    height: 71px;
    border: 1px solid #5674a6;
    border-radius: 2px;
    background:
      repeating-linear-gradient(#6c84ac 0 1px, transparent 1px 2px) center / 8px 7px no-repeat,
      linear-gradient(90deg, #eef2f8, #c8d2e2);
  }
  .sheetbar {
    flex: none;
    display: flex;
    height: 16px;
    background: linear-gradient(#c4d8f4, #a4c0e8);
  }
  .sheetnav {
    width: 63px;
    background: linear-gradient(#e4eefb, #c2d6f2);
  }
  .sheettab {
    position: relative;
    width: 120px;
    border-left: 1px solid #fff;
    background: linear-gradient(#dce8f8, #b6cdee);
    font-family: "Noto Sans", sans-serif;
    font-size: 12px;
  }
  .sheettab::after {
    content: "";
    position: absolute;
    right: -3px;
    top: 0;
    z-index: 1;
    width: 10px;
    height: 16px;
    border-right: 1px solid #6f8cba;
    background: inherit;
    transform: skewX(-35deg);
  }
  .sheettab.active {
    background: #fff;
    font-weight: bold;
  }
  .sheettab.add {
    width: 36px;
  }
  .hscroll {
    flex: 1;
    display: flex;
    align-items: center;
    margin-left: 28px;
    background: linear-gradient(#6688bc, #86a6d4);
  }
  .hscroll .thumb {
    flex: 1;
    max-width: 224px;
    height: 15px;
    margin-right: auto;
    border: 1px solid #5674a6;
    border-radius: 2px;
    background:
      repeating-linear-gradient(90deg, #6c84ac 0 1px, transparent 1px 2px) center / 8px 7px no-repeat,
      linear-gradient(#eef2f8, #c8d2e2);
  }
  .grip {
    width: 5px;
    height: 14px;
    border: 1px solid #6f93c4;
    background-color: #fff;
  }
  .left {
    margin: 0 6px 0 3px;
    border-right-color: #35507e;
  }
  .right {
    margin: 0 4px;
    border-left-color: #35507e;
  }
  .hscroll .grip:last-child {
    margin-right: 16px;
  }

  /* status bar */

  .status {
    flex: none;
    display: flex;
    align-items: center;
    height: 24px;
    background: linear-gradient(#e0ecfb, #c4daf6 40%, #aecbf0 45%, #cfe2fa);
  }
  .ready {
    width: 52px;
    padding-left: 7px;
    border-right: 1px solid #8db2e3;
  }
  .zoombar {
    margin-left: auto;
    height: 100%;
    display: flex;
    align-items: center;
    gap: 5px;
    padding: 0 5px;
    border-left: 1px solid #6f93c4;
    background: linear-gradient(#c8dcf6, #a8c6ee 45%, #8fb4e4 50%, #b8d2f4);
  }
  .views {
    display: flex;
    border: 1px solid #7f9fce;
  }
  .views button {
    width: 18px;
    height: 16px;
  }
  .views .on {
    background-color: #fbc56c;
  }
  .pct {
    width: 34px;
    text-align: center;
  }
  .round {
    width: 15px;
    height: 15px;
    border-radius: 50%;
    border: 1px solid #5c6880;
    background-color: #eef3fa;
    color: #222;
    line-height: 1;
    font-size: 13px;
  }
  input[type="range"] {
    width: 97px;
    height: 14px;
    appearance: none;
    background: linear-gradient(#4f6a96, #4f6a96) center / 100% 1px no-repeat;
  }
  input[type="range"]::-webkit-slider-thumb {
    appearance: none;
    width: 9px;
    height: 12px;
    border: 1px solid #44587c;
    border-radius: 1px 1px 5px 5px;
    background-color: #e4ecf6;
  }

  /* taskbar */

  .taskbar {
    flex: none;
    display: flex;
    align-items: center;
    height: 32px;
    border-top: 2px solid #5f98f4;
    background: linear-gradient(#3e80ee, #245edb 15%, #2560dc 85%, #1941a5);
    color: #fff;
  }
  .start {
    align-self: stretch;
    width: 114px;
    gap: 5px;
    padding-right: 14px;
    border-radius: 0 10px 10px 0;
    background: linear-gradient(#6cba64, #3c9a3a 20%, #389536 80%, #2a6c28);
    font-size: 17px;
    font-weight: 600;
    font-style: italic;
    text-shadow: 1px 1px 1px #1c4a1c;
  }
  .dots {
    width: 6px;
    height: 20px;
    margin: 0 5px 0 7px;
    background: radial-gradient(circle, #1844ac 1px, transparent 1px) 0 0 / 4px 4px;
  }
  .quick {
    display: flex;
    align-items: center;
    gap: 7px;
    width: 176px;
    padding-left: 5px;
  }
  .more {
    align-self: flex-start;
    margin-left: auto;
    line-height: 8px;
  }
  .tasks {
    flex: 1;
    display: flex;
    gap: 2px;
    min-width: 0;
  }
  .tasks button {
    flex: 1;
    min-width: 0;
    max-width: 160px;
    height: 25px;
    justify-content: flex-start;
    gap: 4px;
    padding: 0 5px 0 8px;
    border: 1px solid #2458c8;
    border-radius: 2px;
    background: linear-gradient(#5c9cf8, #3c80f0 20%, #3a7cec);
  }
  .tasks .current {
    border-color: #143c90;
    background: #1e50b4;
  }
  .lang {
    width: 54px;
    padding-left: 2px;
  }
  .tray {
    align-self: stretch;
    display: flex;
    align-items: center;
    gap: 3px;
    width: 107px;
    border-left: 1px solid #0c56b4;
    background: linear-gradient(#2cb0f8, #1290e8 20%, #1290e8 85%, #0c68b8);
  }
  .tray .hide {
    margin-left: -9px;
  }
  .tray time {
    margin: 0 auto;
  }
</style>
